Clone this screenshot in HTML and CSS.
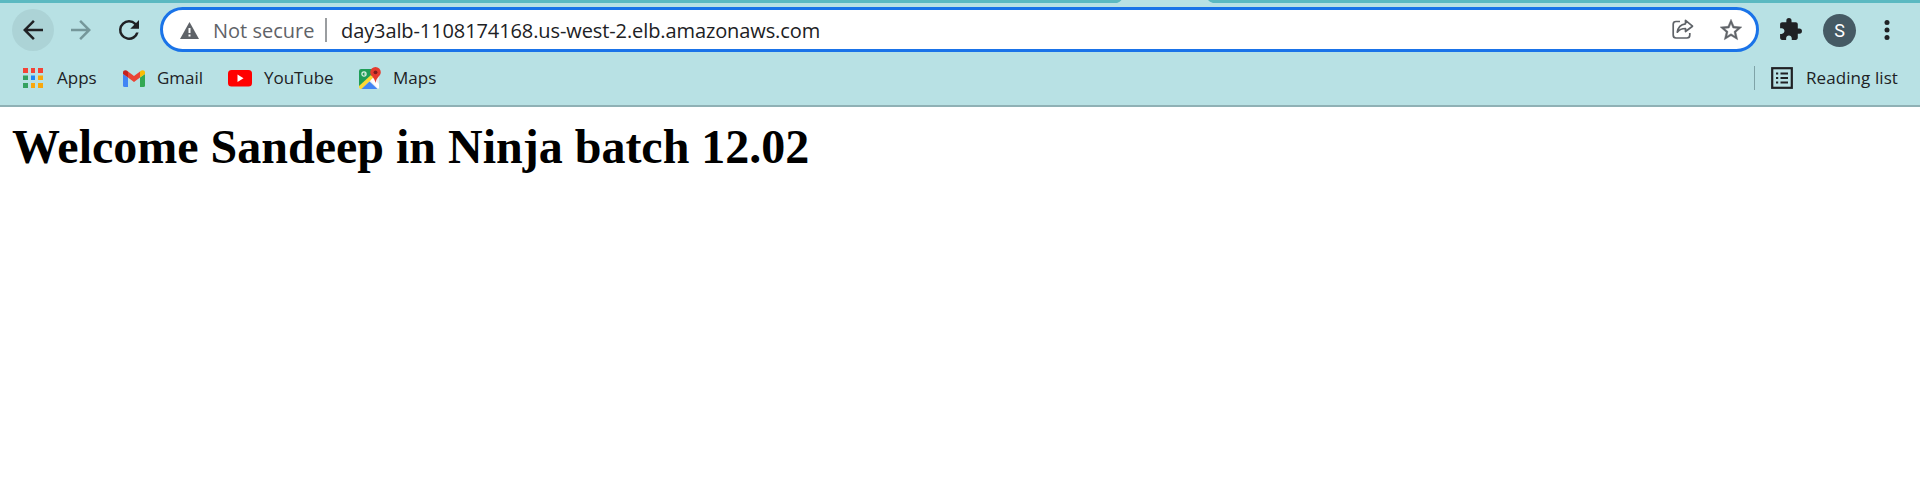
FILE: index.html
```html
<!DOCTYPE html>
<html lang="en">
<head>
<meta charset="utf-8">
<title>day3alb</title>
<link rel="stylesheet" href="styles.css">
</head>
<body>
<header class="chrome">
  <div class="tabstrip"><svg class="active-tab" width="96" height="3" viewBox="0 0 96 3"><path fill="#b8e1e4" d="M0 3Q3 2 4.500 0H91Q92.500 2 96 3z"/></svg></div>
  <div class="toolbar">
    <span class="back"><svg width="30" height="30" viewBox="0 0 24 24" fill="#202124"><path d="M20 11H7.830l5.590-5.590L12 4l-8 8 8 8 1.410-1.410L7.830 13H20v-2z"/></svg></span>
    <svg class="forward" width="30" height="30" viewBox="0 0 24 24" fill="#75979a"><path d="M12 4l-1.410 1.410L16.170 11H4v2h12.170l-5.580 5.590L12 20l8-8z"/></svg>
    <svg class="reload" width="30" height="30" viewBox="0 0 24 24" fill="#202124"><path d="M17.650 6.350A7.960 7.960 0 0 0 12 4a8 8 0 1 0 7.730 10h-2.080A6 6 0 1 1 12 6c1.660 0 3.140.690 4.220 1.780L13 11h7V4z"/></svg>
    <div class="omnibox">
      <svg class="warn" width="19" height="17" viewBox="0 0 19 17"><path fill="#5f6368" d="M9.500 0L19 17H0z"/><path fill="#fff" d="M8.500 6h2v5h-2zM8.500 12.500h2v2h-2z"/></svg>
      <span class="status">Not secure</span>
      <span class="divider"></span>
      <span class="url">day3alb-1108174168.us-west-2.elb.amazonaws.com</span>
      <svg class="share" width="22" height="21" viewBox="0 0 22 21" fill="none" stroke="#5f6368" stroke-width="1.700" stroke-linejoin="round"><path d="M8 2.500H4Q1.200 2.500 1.200 5.300V16Q1.200 19 4 19H15Q17.800 19 17.800 16V14"/><path d="M13.500 1.300L20.500 7.200L13.500 12.500V9.500Q8 9.500 5.300 13.200Q6.300 5.800 13.500 4.800z"/></svg>
      <svg class="star" width="26" height="26" viewBox="0 0 24 24" fill="#5f6368" stroke="#5f6368" stroke-width=".4"><path d="M22 9.240l-7.190-.620L12 2 9.190 8.630 2 9.240l5.460 4.730L5.820 21 12 17.270 18.180 21l-1.630-7.030L22 9.240zM12 15.400l-3.760 2.270 1-4.280-3.320-2.880 4.380-.380L12 6.100l1.710 4.040 4.380.380-3.320 2.880 1 4.280L12 15.400z"/></svg>
    </div>
    <svg class="puzzle" width="25" height="25" viewBox="0 0 24 24" fill="#202124"><path d="M20.500 11H19V7c0-1.100-.900-2-2-2h-4V3.500a2.500 2.500 0 0 0-5 0V5H4c-1.100 0-1.990.900-1.990 2v3.800H3.500c1.490 0 2.700 1.210 2.700 2.700s-1.210 2.700-2.700 2.700H2V20c0 1.100.900 2 2 2h3.800v-1.500c0-1.490 1.210-2.700 2.700-2.700s2.700 1.210 2.700 2.700V22H17c1.100 0 2-.900 2-2v-4h1.500a2.500 2.500 0 0 0 0-5z"/></svg>
    <span class="avatar">S</span>
    <svg class="menu" width="6" height="22" viewBox="0 0 6 22" fill="#202124"><circle cx="3" cy="3.500" r="2.500"/><circle cx="3" cy="11" r="2.500"/><circle cx="3" cy="18.500" r="2.500"/></svg>
  </div>
  <nav class="bookmarks">
    <svg class="i-apps" width="20" height="20" viewBox="0 0 20 20"><path fill="#f44336" d="M0 0h5v5H0zM8 0h4v5H8zM15 0h5v5h-5z"/><path fill="#34a160" d="M0 7.500h5v4.500H0zM0 15h5v5H0z"/><path fill="#1e88f5" d="M8 7.500h4v4.500H8z"/><path fill="#f9a80c" d="M15 7.500h5v4.500h-5zM8 15h4v5H8zM15 15h5v5h-5z"/></svg>
    <span class="label apps">Apps</span>
    <svg class="i-gmail" width="22" height="17" viewBox="0 0 22 17"><path fill="#4285f4" d="M0 4l5 3.500V17H1.500Q0 17 0 15.500z"/><path fill="#34a853" d="M22 4l-5 3.500V17h3.500q1.500 0 1.500-1.500z"/><path fill="#ea4335" d="M5 1.500L11 6l6-4.500v6L11 12 5 7.500z"/><path fill="#c5221f" d="M0 2.500C0 0 3-.5 5 1.500v6L0 4z"/><path fill="#fbbc04" d="M22 2.500C22 0 19-.5 17 1.500v6L22 4z"/></svg>
    <span class="label gmail">Gmail</span>
    <svg class="i-yt" width="24" height="17" viewBox="0 0 24 17"><rect width="24" height="16.500" rx="3.500" fill="#f00"/><path fill="#fff" d="M9.500 4.500L15.500 8.200L9.500 12z"/></svg>
    <span class="label youtube">YouTube</span>
    <svg class="i-maps" width="22" height="22" viewBox="0 0 22 22"><rect x="0" y="2" width="20" height="20" rx="2" fill="#e8edf0"/><path fill="#1f9d57" d="M2 2h12v6L0 20V4q0-2 2-2z"/><path fill="#fdd835" d="M0 19L12 8l2.500 2.500L3 22H2Q0 22 0 20z"/><path fill="#4285f4" d="M2.500 22L10.500 14.500L18.500 22z"/><path fill="#fff" d="M11.500 13.500L14 11l6 6v3q0 1-.8 1.700z"/><circle cx="5" cy="7" r="2.100" fill="none" stroke="#d8efe2" stroke-width="1.200"/><path d="M5 7h2" stroke="#d8efe2"/><path fill="#e53b2e" d="M16.500 0a5.300 5.300 0 0 1 5.300 5.300C21.800 9 17.500 10 16.500 16C15.500 10 11.200 9 11.200 5.300A5.300 5.300 0 0 1 16.500 0z"/><circle cx="16.500" cy="5.300" r="1.900" fill="#7e1d1d"/></svg>
    <span class="label maps">Maps</span>
    <span class="rl-divider"></span>
    <svg class="i-list" width="22" height="22" viewBox="0 0 22 22"><rect x="1.200" y="1.200" width="19.600" height="19.600" fill="none" stroke="#202124" stroke-width="2.200"/><path fill="#202124" d="M5 5.500h2.200v2H5zM5 10h2.200v2H5zM5 14.500h2.200v2H5zM9.500 5.500H17v2H9.500zM9.500 10H17v2H9.500zM9.500 14.500H17v2H9.500z"/></svg>
    <span class="label reading">Reading list</span>
  </nav>
</header>
<main class="page"><h1 class="welcome">Welcome Sandeep in Ninja batch 12.02</h1></main>
</body>
</html>
```
FILE: styles.css
```css
* { box-sizing: border-box; }
body { margin: 0; background: #fff; overflow: hidden; }
svg { display: block; flex: none; }
.chrome { height: 107px; background: #b8e1e4; border-bottom: 2px solid #8fb1b5; font-family: "Open Sans", "Noto Sans", sans-serif; color: #202124; }
.tabstrip { height: 3px; background: #5bb9c1; padding-left: 1117px; }
.toolbar { display: flex; align-items: center; height: 53px; padding-left: 12px; }
.back { width: 42px; height: 42px; border-radius: 50%; background: #acd3d6; display: flex; align-items: center; justify-content: center; flex: none; }
.forward { margin-left: 12px; }
.reload { margin-left: 18px; }
.omnibox { display: flex; align-items: center; width: 1599px; height: 45px; margin-left: 16px; padding: 0 12px 0 17px; border: 3px solid #1a73e8; border-radius: 23px; background: #fff; flex: none; white-space: nowrap; font-size: 20px; line-height: 28px; }
.warn { margin-top: 2px; }
.status { width: 100px; margin-left: 14px; padding-top: 2px; color: #5f6368; }
.divider { width: 2px; height: 24px; margin-left: 12px; background: #9a9da0; }
.url { margin-left: 14px; padding-top: 2px; letter-spacing: -0.1px; }
.share { margin-left: auto; }
.star { margin-left: 24px; }
.puzzle { margin-left: 19px; }
.avatar { display: flex; align-items: center; justify-content: center; width: 33px; height: 33px; margin: 1px 0 0 20px; border-radius: 50%; background: #455a64; color: #fff; font: 18px/33px Roboto, sans-serif; flex: none; }
.menu { margin-left: 28px; }
.bookmarks { display: flex; align-items: center; height: 43px; padding-left: 23px; font-size: 17px; line-height: 24px; white-space: nowrap; }
.label { flex: none; }
.i-gmail, .i-yt { margin-top: 1px; }
.apps { width: 66px; margin-left: 14px; }
.gmail { width: 71px; margin-left: 12px; }
.youtube { width: 95px; margin-left: 12px; letter-spacing: -0.05px; }
.maps { margin-left: 12px; }
.rl-divider { width: 1px; height: 24px; margin-left: auto; background: #7fa3a7; }
.i-list { margin-left: 16px; }
.reading { width: 114px; margin-left: 13px; letter-spacing: 0.08px; }
.page { padding: 12px; }
.welcome { margin: 0; font: bold 48px/56px "Liberation Serif", serif; color: #000; }
```
